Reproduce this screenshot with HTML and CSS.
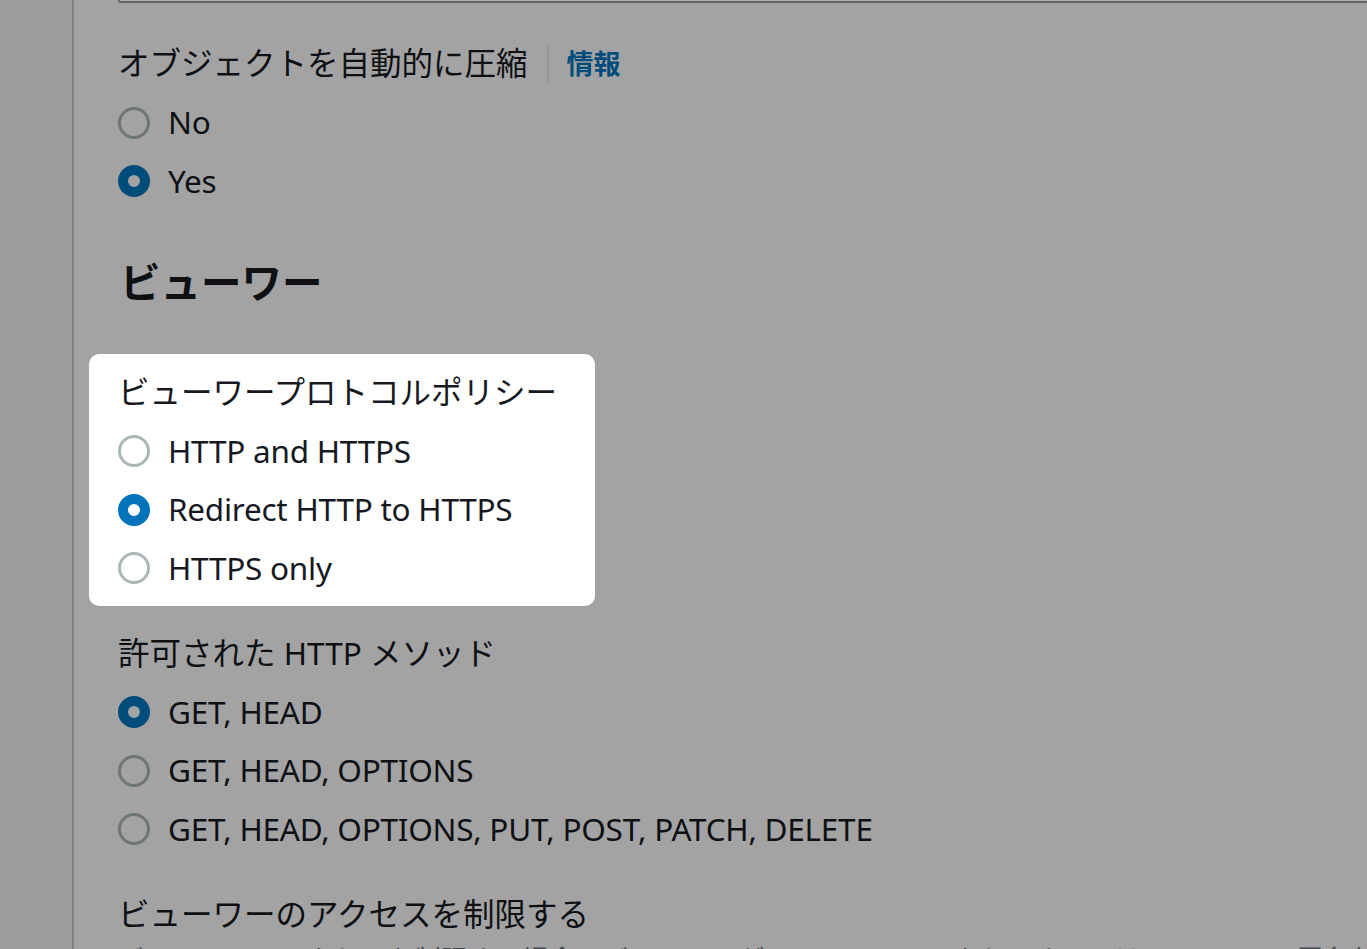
FILE: index.html
```html
<!DOCTYPE html>
<html lang="ja">
<head>
<meta charset="utf-8">
<title>ビューワー設定</title>
<link rel="stylesheet" href="styles.css">
</head>
<body>
<div class="layout">
  <aside class="sidebar"></aside>
  <main class="main">
    <div class="prev-card"></div>

    <section class="field first">
      <div class="label-row">
        <span class="label">オブジェクトを自動的に圧縮</span>
        <span class="sep"></span>
        <a class="info">情報</a>
      </div>
      <div class="radio-row"><span class="radio"></span><span class="opt">No</span></div>
      <div class="radio-row"><span class="radio checked"></span><span class="opt">Yes</span></div>
    </section>

    <h2 class="heading">ビューワー</h2>

    <section class="field spotlight">
      <div class="label">ビューワープロトコルポリシー</div>
      <div class="radio-row"><span class="radio"></span><span class="opt">HTTP and HTTPS</span></div>
      <div class="radio-row"><span class="radio checked"></span><span class="opt">Redirect HTTP to HTTPS</span></div>
      <div class="radio-row"><span class="radio"></span><span class="opt">HTTPS only</span></div>
    </section>

    <section class="field methods">
      <div class="label">許可された HTTP メソッド</div>
      <div class="radio-row"><span class="radio checked"></span><span class="opt">GET, HEAD</span></div>
      <div class="radio-row"><span class="radio"></span><span class="opt">GET, HEAD, OPTIONS</span></div>
      <div class="radio-row"><span class="radio"></span><span class="opt">GET, HEAD, OPTIONS, PUT, POST, PATCH, DELETE</span></div>
    </section>

    <section class="field restrict">
      <div class="label">ビューワーのアクセスを制限する</div>
      <div class="desc">ビューワーのアクセスを制限する場合、ビューワーがコンテンツにアクセスするには CloudFront 署名付き URL または署名付き Cookie を使用する必要があります。</div>
    </section>
  </main>
</div>
</body>
</html>
```

FILE: styles.css
```css
* { box-sizing: border-box; }

html, body {
  margin: 0;
  padding: 0;
  height: 100%;
  overflow: hidden;
}

body {
  background: #a3a3a3;
  font-family: "Noto Sans", "Noto Sans CJK JP", sans-serif;
  color: #0e1014;
}

.layout {
  display: flex;
  min-height: 100%;
}

.sidebar {
  width: 74px;
  flex: 0 0 74px;
  background: #9b9c9c;
  border-right: 2px solid #7e8486;
}

.main {
  flex: 1;
  padding-left: 44px;
  min-width: 0;
  overflow: hidden;
}

.prev-card {
  height: 3px;
  background: #adadad;
  border-left: 2px solid #5f6668;
  border-bottom: 2px solid #5f6668;
  border-bottom-left-radius: 6px;
}

.field {
  display: flex;
  flex-direction: column;
}

.first {
  margin-top: 35px;
}

.label-row {
  display: flex;
  align-items: center;
  height: 49.5px;
  margin-bottom: 6px;
}

.label {
  font-size: 31.5px;
  line-height: 49.5px;
  height: 49.5px;
  white-space: nowrap;
}

.field > .label {
  margin-bottom: 6px;
}

.sep {
  width: 2px;
  height: 38px;
  background: #949797;
  margin: 0 18px 0 19px;
}

.info {
  font-size: 27px;
  font-weight: 700;
  color: #004c7b;
  line-height: 49.5px;
  margin-top: 2px;
}

.radio-row {
  display: flex;
  align-items: center;
  height: 58.5px;
  gap: 18px;
}

.radio {
  width: 32px;
  height: 32px;
  flex: 0 0 32px;
  border-radius: 50%;
  border: 3px solid #6d7576;
}

.radio.checked {
  border: 10px solid #004d7c;
  background: #a3a3a3;
}

.opt {
  font-size: 31.5px;
  line-height: 49.5px;
  letter-spacing: -0.25px;
  white-space: nowrap;
  margin-top: -2px;
}

.heading {
  margin: 44px 0 43px 2px;
  font-size: 40.5px;
  font-weight: 700;
  line-height: 56px;
  height: 56px;
}

.spotlight {
  background: #ffffff;
  color: #16191f;
  width: 506px;
  margin-left: -29px;
  padding: 13px 29px 8px;
  border-radius: 10px;
}

.spotlight .radio {
  border-color: #aab7b8;
}

.spotlight .radio.checked {
  border-color: #0073bb;
  background: #ffffff;
}

.methods {
  margin-top: 22px;
}

.restrict {
  margin-top: 30px;
}

.desc {
  font-size: 27px;
  line-height: 40px;
  color: #43484d;
  white-space: nowrap;
  margin-top: -4px;
}
```
